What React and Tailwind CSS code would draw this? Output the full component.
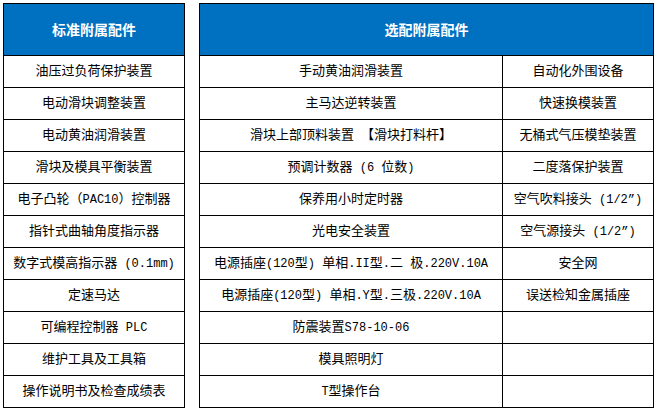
import React from 'react';

const standard = [
  '油压过负荷保护装置',
  '电动滑块调整装置',
  '电动黄油润滑装置',
  '滑块及模具平衡装置',
  '电子凸轮（PAC10）控制器',
  '指针式曲轴角度指示器',
  '数字式模高指示器 (0.1mm)',
  '定速马达',
  '可编程控制器 PLC',
  '维护工具及工具箱',
  '操作说明书及检查成绩表',
];

const optional = [
  ['手动黄油润滑装置', '自动化外围设备'],
  ['主马达逆转装置', '快速换模装置'],
  ['滑块上部顶料装置 【滑块打料杆】', '无桶式气压模垫装置'],
  ['预调计数器 (6 位数)', '二度落保护装置'],
  ['保养用小时定时器', '空气吹料接头 (1/2”)'],
  ['光电安全装置', '空气源接头 (1/2”)'],
  ['电源插座(120型) 单相.II型.二 极.220V.10A', '安全网'],
  ['电源插座(120型) 单相.Y型.三极.220V.10A', '误送检知金属插座'],
  ['防震装置S78-10-06', ''],
  ['模具照明灯', ''],
  ['T型操作台', ''],
];

const cellFont = { fontFamily: '"Liberation Mono", "Noto Sans CJK SC", monospace' };
const headFont = { fontFamily: '"Noto Sans CJK SC", "Noto Sans", sans-serif' };

// latin runs are half-width in the original song-style face, so set them a touch smaller
const Label = ({ text }) =>
  text.split(/([\u0020-\u007e\u201d]+)/).map((part, i) =>
    /^[\u0020-\u007e\u201d]+$/.test(part) ? (
      <span key={i} className="text-[12px]">{part}</span>
    ) : (
      part
    )
  );

const App = () => {
  return (
    <div className="w-[659px] h-[412px] bg-white flex items-start gap-[14px] pl-[3px] pt-[3px]">
      <table className="w-[182px] border-collapse border border-black text-[13px] text-black" style={cellFont}>
        <thead>
          <tr className="h-[52px]">
            <th className="bg-[#0070c0] border border-black text-white text-[14px] font-bold" style={headFont}>标准附属配件</th>
          </tr>
        </thead>
        <tbody>
          {standard.map((item, i) => (
            <tr key={i} className="h-[32px]">
              <td className="border border-black text-center whitespace-nowrap leading-none"><Label text={item} /></td>
            </tr>
          ))}
        </tbody>
      </table>

      <table className="w-[455px] border-collapse border border-black text-[13px] text-black" style={cellFont}>
        <thead>
          <tr className="h-[52px]">
            <th colSpan={2} className="bg-[#0070c0] border border-black text-white text-[14px] font-bold" style={headFont}>选配附属配件</th>
          </tr>
        </thead>
        <tbody>
          {optional.map(([a, b], i) => (
            <tr key={i} className="h-[32px]">
              <td className="w-[303px] border border-black text-center whitespace-nowrap leading-none"><Label text={a} /></td>
              <td className="border border-black text-center whitespace-nowrap leading-none"><Label text={b} /></td>
            </tr>
          ))}
        </tbody>
      </table>
    </div>
  );
};

export default App;
